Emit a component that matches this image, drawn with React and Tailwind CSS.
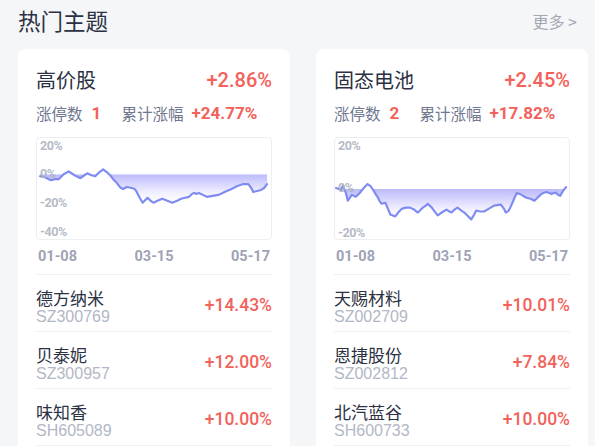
import React from "react";

const leftPts = [[39,176],[44,177],[50,180],[54,179],[58,179],[63,174],[68,171],[74,175],[80,178],[84,175],[87,173],[91,175],[95,176],[99,172],[103,169],[107,172],[110,175],[114,180],[117,183],[120,187],[123,189],[127,187],[132,188],[135,189],[137,192],[140,198],[143,203],[146,200],[148,198],[151,201],[154,203],[158,201],[163,199],[168,201],[173,203],[178,201],[182,199],[186,198],[190,197],[193,194],[195,193],[198,194],[200,193],[204,195],[208,197],[214,196],[220,195],[226,192],[233,189],[239,186],[245,184],[250,184],[253,188],[255,192],[259,191],[263,190],[266,188],[269,184]];

const rightPts = [[335,188],[338,189],[340,190],[342,186],[345,193],[347,201],[349,198],[351,195],[355,197],[358,194],[360,192],[364,187],[367,184],[370,186],[372,189],[375,194],[377,197],[379,201],[381,204],[385,203],[388,210],[390,215],[395,217],[398,213],[402,209],[406,208],[410,208],[414,210],[418,213],[421,210],[423,208],[426,206],[428,204],[432,208],[435,212],[438,216],[442,213],[447,210],[450,212],[452,213],[455,210],[458,208],[462,211],[465,213],[469,217],[472,220],[475,215],[477,211],[481,212],[485,212],[490,209],[495,206],[502,205],[505,209],[507,213],[510,211],[512,207],[515,200],[518,193],[521,194],[523,195],[526,197],[528,198],[532,199],[536,201],[539,198],[542,195],[545,193],[548,192],[551,193],[553,194],[556,193],[558,193],[560,195],[562,196],[565,191],[568,187]];

function Chart({ pts, ox, oy, zeroY, labels, id }) {
  const p = pts.map(([x, y]) => [x - ox, y - oy]);
  const line = p.map(([x, y], i) => `${i ? "L" : "M"}${x.toFixed(1)} ${y.toFixed(1)}`).join(" ");
  const z = zeroY - oy;
  const fill = `${line} L${p[p.length - 1][0]} ${z} L${p[0][0]} ${z} Z`;
  return (
    <div className="relative mt-[11px] h-[103px] rounded-[4px] border border-[#eceef2] bg-white">
      <svg className="absolute inset-0" width="100%" height="100%" viewBox="0 0 237 103" preserveAspectRatio="none">
        <defs>
          <linearGradient id={`g${id}`} x1="0" y1="0" x2="0" y2="1">
            <stop offset="0" stopColor="#aeacfa" />
            <stop offset="0.7" stopColor="#f1f0ff" />
            <stop offset="1" stopColor="#ffffff" />
          </linearGradient>
          <clipPath id={`c${id}`}>
            <rect x="0" y={z} width="237" height={103 - z} />
          </clipPath>
        </defs>
        <path d={fill} fill={`url(#g${id})`} clipPath={`url(#c${id})`} />
        <path d={line} fill="none" stroke="#7f8cef" strokeWidth="2.2" strokeLinejoin="round" strokeLinecap="round" />
      </svg>
      {labels.map(([t, y]) => (
        <span
          key={t}
          className="absolute left-[3px] text-[12.5px] font-bold leading-[14px] text-[#aeb3c2] opacity-90 font-['Roboto',sans-serif] tracking-[-0.4px]"
          style={{ top: y - oy - 7 }}
        >
          {t}
        </span>
      ))}
    </div>
  );
}

function Card({ title, change, limit, total, chart, rows }) {
  return (
    <div className="rounded-[8px] bg-white px-[18px] pt-[17px] pb-[20px]">
      <div className="flex h-[28px] items-center justify-between">
        <span className="text-[20px] text-[#2b3142] font-['Noto_Sans_CJK_SC',sans-serif]">{title}</span>
        <span className="text-[20px] font-medium text-[#f2625b] font-['Roboto',sans-serif]">{change}</span>
      </div>
      <div className="mt-[8px] flex h-[24px] items-center text-[15.5px] font-['Noto_Sans_CJK_SC',sans-serif]">
        <span className="text-[#6f7790]">涨停数</span>
        <span className="ml-[9px] w-[29px] font-bold text-[#f2625b] font-['Roboto',sans-serif] text-[17px]">{limit}</span>
        <span className="ml-[1px] text-[#6f7790]">累计涨幅</span>
        <span className="ml-[8px] font-bold text-[#f2625b] font-['Roboto',sans-serif] text-[17px]">{total}</span>
      </div>
      {chart}
      <div className="flex h-[34px] items-center justify-between px-[2px] text-[14.5px] font-bold text-[#9ea3b6] font-['Roboto',sans-serif]">
        <span>01-08</span>
        <span>03-15</span>
        <span>05-17</span>
      </div>
      <div className="border-t border-[#eef0f3]">
        {rows.map(([name, code, pct]) => (
          <div key={code} className="flex h-[57px] items-center justify-between border-b border-[#eef0f3] pt-[5px]">
            <div className="flex flex-col">
              <span className="text-[17px] leading-[21px] text-[#2b3142] font-['Noto_Sans_CJK_SC',sans-serif]">{name}</span>
              <span className="text-[16px] leading-[17px] text-[#b2b7c6] font-['Liberation_Sans',sans-serif]">{code}</span>
            </div>
            <span className="text-[17.5px] font-medium text-[#f2625b] font-['Roboto',sans-serif]">{pct}</span>
          </div>
        ))}
      </div>
    </div>
  );
}

export default function App() {
  return (
    <div className="h-[446px] w-[595px] overflow-hidden bg-[#f5f6f8]">
      <div className="flex h-[49px] items-center justify-between pl-[18px] pr-[18px] pb-[7px]">
        <span className="text-[22.5px] text-[#2b3142] font-['Noto_Sans_CJK_SC',sans-serif]">热门主题</span>
        <span className="text-[16px] text-[#a3a7b3] font-['Noto_Sans_CJK_SC',sans-serif]">更多 &gt;</span>
      </div>
      <div className="grid grid-cols-[272px_272px] gap-[26px] pl-[18px]">
        <Card
          title="高价股"
          change="+2.86%"
          limit="1"
          total="+24.77%"
          chart={
            <Chart
              id="a"
              pts={leftPts}
              ox={36}
              oy={137}
              zeroY={174}
              labels={[["20%", 145], ["0%", 173], ["-20%", 202], ["-40%", 231]]}
            />
          }
          rows={[
            ["德方纳米", "SZ300769", "+14.43%"],
            ["贝泰妮", "SZ300957", "+12.00%"],
            ["味知香", "SH605089", "+10.00%"],
          ]}
        />
        <Card
          title="固态电池"
          change="+2.45%"
          limit="2"
          total="+17.82%"
          chart={
            <Chart
              id="b"
              pts={rightPts}
              ox={334}
              oy={137}
              zeroY={189}
              labels={[["20%", 145], ["0%", 187], ["-20%", 232]]}
            />
          }
          rows={[
            ["天赐材料", "SZ002709", "+10.01%"],
            ["恩捷股份", "SZ002812", "+7.84%"],
            ["北汽蓝谷", "SH600733", "+10.00%"],
          ]}
        />
      </div>
    </div>
  );
}
